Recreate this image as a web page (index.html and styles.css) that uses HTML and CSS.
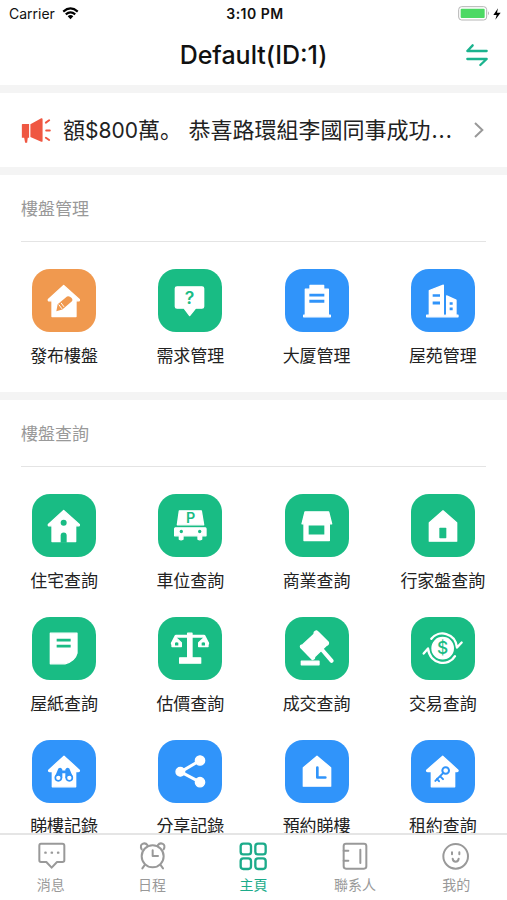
FILE: index.html
```
<!DOCTYPE html>
<html lang="zh-Hant">
<head>
    <meta charset="UTF-8">
    <meta name="viewport" content="width=device-width, initial-scale=1.0">
    <title>主頁</title>
    <link rel="stylesheet" href="styles.css">
</head>
<body>
    <div class="app">
        <div class="status-bar">
            <div class="carrier">
                <span class="carrier-name">Carrier</span>
                <svg class="wifi" viewBox="0 0 54 40">
                    <path d="M4 14Q27-6 50 14" fill="none" stroke="#000" stroke-width="7"/>
                    <path d="M12 23Q27 10 42 23" fill="none" stroke="#000" stroke-width="7"/>
                    <path d="M18 29Q27 21 36 29L27 38Z"/>
                </svg>
            </div>
            <span class="time">3:10 PM</span>
            <div class="power">
                <svg class="battery" viewBox="0 0 96 45">
                    <rect x="2" y="2" width="84" height="40" rx="9" fill="#fff" stroke="#b5b5b5" stroke-width="3"/>
                    <rect x="8" y="8" width="72" height="28" rx="3" fill="#4cd964"/>
                    <path d="M90 16q6 6 0 12z" fill="#b5b5b5"/>
                </svg>
                <svg class="bolt" viewBox="0 0 24 36"><path d="M15 1L1 21h10L7 35 23 14H12z"/></svg>
            </div>
        </div>

        <header class="navbar">
            <h1>Default(ID:1)</h1>
            <svg class="swap" viewBox="0 0 66 66"><path d="M62 21H4L20 4M4 45H62L43 63"/></svg>
        </header>

        <div class="notice">
            <svg class="horn" viewBox="0 0 88 76">
                <path d="M3 18H23V60H19L17 75H11L8 60H1V20Q1 18 3 18Z"/>
                <path d="M27 19L60 1Q64 0 64 4V69Q64 74 60 72L27 58Z"/>
                <path class="wave" d="M74 14L84 7M75 38H86M74 60L84 67"/>
            </svg>
            <p>額<span class="num">$800</span>萬<span class="stop" lang="zh-Hans">。</span> 恭喜路環組李國同事成功<span class="dots">...</span></p>
            <svg class="arrow" viewBox="0 0 30 48"><path d="M3 3L25 24 3 45"/></svg>
        </div>

        <main>
            <section>
                <h2>樓盤管理</h2>
                <div class="menu">
                    <div class="menu-item">
                        <svg class="tile orange" viewBox="0 0 192 188">
                            <path class="w" d="M95 49L142 91Q143 95 139 95H132V142H60V95H52Q48 95 49 91Z"/>
                            <path class="c" d="M73 126L77 105 105 82Q112 79 118 86T119 97L91 121Z"/>
                            <path class="hole" d="M80 106L90 119M87 101L96 113"/>
                        </svg>
                        <span>發布樓盤</span>
                    </div>
                    <div class="menu-item">
                        <svg class="tile green" viewBox="0 0 192 188">
                            <path class="w" d="M57 53H132Q137 53 137 58V112Q137 117 132 117H113L95 139 78 117H57Q52 117 52 112V58Q52 53 57 53Z"/>
                            <text class="c" x="95" y="104" font-size="53">?</text>
                        </svg>
                        <span>需求管理</span>
                    </div>
                    <div class="menu-item">
                        <svg class="tile blue" viewBox="0 0 192 188">
                            <path class="w" d="M75 49H116V60H130V138H136V143H56V138H61V60H75Z"/>
                            <path class="c" d="M73 74H118V82H73ZM73 92H118V101H73Z"/>
                        </svg>
                        <span>大厦管理</span>
                    </div>
                    <div class="menu-item">
                        <svg class="tile blue" viewBox="0 0 192 188">
                            <path class="w" d="M55 64L97 48V138H107V80L135 93V138H141V143H47V138H55Z"/>
                            <path class="c" d="M65 75H87V83H65ZM65 97H87V106H65ZM99 60H104V135H99ZM116 99H125V107H116ZM116 115H125V123H116Z"/>
                        </svg>
                        <span>屋苑管理</span>
                    </div>
                </div>
            </section>

            <section>
                <h2>樓盤查詢</h2>
                <div class="menu">
                    <div class="menu-item">
                        <svg class="tile green" viewBox="0 0 192 188">
                            <path class="w" d="M95 49L142 91Q143 95 139 95H131V142H60V95H52Q48 95 49 91Z"/>
                            <circle class="c" cx="95" cy="86" r="9"/>
                            <path class="c" d="M86 146V124Q86 115 95 115T104 124V146Z"/>
                        </svg>
                        <span>住宅查詢</span>
                    </div>
                    <div class="menu-item">
                        <svg class="tile green" viewBox="0 0 192 188">
                            <path class="w" d="M64 50H130L137 92H58ZM52 101H142Q144 101 144 104V125H131V135Q125 139 120 135V125H75V135Q69 139 64 135V125H50V104Q50 101 52 101Z"/>
                            <text class="c" x="98" y="88" font-size="43">P</text>
                            <circle class="c" cx="70" cy="112" r="5"/>
                            <circle class="c" cx="125" cy="112" r="5"/>
                        </svg>
                        <span>車位查詢</span>
                    </div>
                    <div class="menu-item">
                        <svg class="tile green" viewBox="0 0 192 188">
                            <path class="w" d="M60 53H131L140 89H133V139H57V89H51Z"/>
                            <rect class="c" x="71" y="94" width="47" height="27"/>
                        </svg>
                        <span>商業查詢</span>
                    </div>
                    <div class="menu-item">
                        <svg class="tile green" viewBox="0 0 192 188">
                            <path class="w" d="M96 50L137 86V141H55V86Z"/>
                            <rect class="c" x="85" y="101" width="21" height="31" rx="2"/>
                        </svg>
                        <span>行家盤查詢</span>
                    </div>
                    <div class="menu-item">
                        <svg class="tile green" viewBox="0 0 192 188">
                            <path class="w" d="M55 48H135V108Q129 132 99 140H55Z"/>
                            <path class="c" d="M74 65H116V73H74ZM74 83H116V91H74Z"/>
                        </svg>
                        <span>屋紙查詢</span>
                    </div>
                    <div class="menu-item">
                        <svg class="tile green" viewBox="0 0 192 188">
                            <path class="w" d="M89 48H102V122H128V138H65V122H89Z"/>
                            <path class="line" d="M43 79L54 57H138L149 79" stroke-width="9"/>
                            <path class="w" d="M42 77L54 62 70 77V88H42ZM122 77L138 62 150 77V88H122Z"/>
                            <path class="c" d="M51 85V77Q56 73 61 77V85ZM131 85V77Q136 73 141 77V85Z"/>
                        </svg>
                        <span>估價查詢</span>
                    </div>
                    <div class="menu-item">
                        <svg class="tile green" viewBox="0 0 192 188">
                            <path class="w" d="M88 45Q94 37 100 45L130 75Q132 82 124 85L89 119Q89 127 82 127L47 91Q44 84 53 83L87 51Z"/>
                            <path class="line" d="M108 94L140 131" stroke-width="12"/>
                            <rect class="w" x="49" y="132" width="53" height="11"/>
                        </svg>
                        <span>成交查詢</span>
                    </div>
                    <div class="menu-item">
                        <svg class="tile green" viewBox="0 0 192 188">
                            <circle class="w" cx="95" cy="93" r="32"/>
                            <path class="line" d="M61 65C83 37 133 46 138 91L152 76M38 109L51 94C57 143 113 150 132 117" stroke-width="7"/>
                            <text class="c dollar" x="95" y="111" font-size="52">$</text>
                        </svg>
                        <span>交易查詢</span>
                    </div>
                    <div class="menu-item">
                        <svg class="tile blue" viewBox="0 0 192 188">
                            <path class="w" d="M96 48L142 90Q143 94 139 94H131V140H61V94H53Q49 94 50 90Z"/>
                            <path class="c" d="M68 111L79 85Q87 80 91 88V114ZM100 114V88Q104 80 112 85L123 111ZM91 91H100V99H91Z"/>
                            <circle class="lens" cx="79" cy="113" r="9"/>
                            <circle class="lens" cx="112" cy="113" r="9"/>
                        </svg>
                        <span>睇樓記錄</span>
                    </div>
                    <div class="menu-item">
                        <svg class="tile blue" viewBox="0 0 192 188">
                            <path class="line" d="M126 61L68 95 126 126" stroke-width="9"/>
                            <circle class="w" cx="67" cy="95" r="13"/>
                            <circle class="w" cx="126" cy="61" r="14"/>
                            <circle class="w" cx="126" cy="126" r="14"/>
                        </svg>
                        <span>分享記錄</span>
                    </div>
                    <div class="menu-item">
                        <svg class="tile blue" viewBox="0 0 192 188">
                            <path class="w" d="M96 48L137 83V138H55V83Z"/>
                            <path class="hand" d="M97 82V112H121"/>
                        </svg>
                        <span>預約睇樓</span>
                    </div>
                    <div class="menu-item">
                        <svg class="tile blue" viewBox="0 0 192 188">
                            <path class="w" d="M95 48L141 90Q142 94 138 94H131V140H61V94H50Q46 94 47 90Z"/>
                            <circle class="key" cx="104" cy="91" r="10"/>
                            <path class="key" d="M97 98L73 122M87 108L96 117M78 116L84 123"/>
                        </svg>
                        <span>租約查詢</span>
                    </div>
                </div>
            </section>
        </main>

        <nav class="tabbar">
            <div class="tab">
                <svg viewBox="0 0 84 84">
                    <path d="M12 5H76Q82 5 82 11V55Q82 60 76 60H60L44 77 28 60H12Q7 60 7 55V11Q7 5 12 5Z"/>
                    <path class="dot" d="M25 32h1M44 32h1M63 32h1"/>
                </svg>
                <span>消息</span>
            </div>
            <div class="tab">
                <svg viewBox="0 0 84 84">
                    <circle cx="44" cy="43" r="33"/>
                    <path d="M44 25V42H60M21 68L13 79M67 68L75 79M11 22C2 5 21-1 29 10M77 22C86 5 67-1 59 10"/>
                </svg>
                <span>日程</span>
            </div>
            <div class="tab active">
                <svg viewBox="0 0 84 84">
                    <rect x="5" y="5" width="31" height="32" rx="8"/>
                    <rect x="49" y="5" width="31" height="32" rx="8"/>
                    <rect x="5" y="49" width="31" height="32" rx="8"/>
                    <rect x="49" y="49" width="31" height="32" rx="8"/>
                </svg>
                <span>主頁</span>
            </div>
            <div class="tab">
                <svg viewBox="0 0 84 84">
                    <rect x="8" y="5" width="68" height="75" rx="7"/>
                    <path d="M8 26H22M8 56H22M58 23V63"/>
                </svg>
                <span>聯系人</span>
            </div>
            <div class="tab">
                <svg viewBox="0 0 84 84">
                    <circle cx="41" cy="43" r="37"/>
                    <path d="M30 31V37M52 31V37M32 50Q33 59 41 59T50 50"/>
                </svg>
                <span>我的</span>
            </div>
        </nav>
    </div>
</body>
</html>
```
FILE: styles.css
```
* {
    box-sizing: border-box;
}

body {
    margin: 0;
    background-color: #fff;
    font-family: "Noto Sans CJK TC", sans-serif;
    color: #222;
}

svg {
    display: block;
    flex: none;
    overflow: visible;
}

h1, h2, p {
    margin: 0;
    font-weight: normal;
}

.app {
    display: flex;
    flex-direction: column;
    height: 900px;
    overflow: hidden;
}

.status-bar {
    display: grid;
    grid-template-columns: 1fr auto 1fr;
    align-items: center;
    height: 27px;
    padding: 0 6px 0 9px;
    font-family: Inter, sans-serif;
    font-size: 14px;
    color: #111;
}

.carrier {
    display: flex;
    align-items: center;
    gap: 7px;
}

.time {
    font-weight: 600;
    letter-spacing: 0.5px;
}

.wifi {
    width: 17px;
    height: 13px;
}

.power {
    display: flex;
    justify-content: flex-end;
    align-items: center;
    gap: 3px;
}

.battery {
    width: 32px;
    height: 15px;
}

.bolt {
    width: 8px;
    height: 12px;
}

.navbar {
    display: grid;
    grid-template-columns: 1fr auto 1fr;
    align-items: center;
    height: 58px;
    padding: 0 19px;
}

.navbar h1 {
    grid-column: 2;
    font-family: Inter, sans-serif;
    font-size: 25px;
    font-weight: 500;
    line-height: 30px;
    margin-bottom: 2px;
    color: #111;
}

.swap {
    justify-self: end;
    width: 22px;
    height: 22px;
    margin-bottom: 3px;
    fill: none;
    stroke: #1bb38e;
    stroke-width: 7;
    stroke-linecap: round;
    stroke-linejoin: round;
}

.notice {
    display: flex;
    align-items: center;
    height: 90px;
    padding: 0 23px 0 21px;
    border-top: 8px solid #f4f4f4;
    border-bottom: 8px solid #f4f4f4;
}

.horn {
    width: 30px;
    height: 25px;
    fill: #ef5742;
}

.horn .wave {
    stroke: #ef5742;
    stroke-width: 6;
    stroke-linecap: round;
}

.notice p {
    flex: 1;
    margin: 0 0 4px 12px;
    font-size: 22px;
    white-space: nowrap;
}

.notice .num {
    font-family: Inter, sans-serif;
    font-size: 21px;
}

.notice .stop {
    margin-right: 1.5px;
    font-family: "Noto Sans CJK SC", sans-serif;
}

.notice .dots {
    margin-left: 1px;
    letter-spacing: 1px;
}

.arrow {
    width: 10px;
    height: 16px;
    fill: none;
    stroke: #999;
    stroke-width: 6;
}

main {
    flex: 1;
    min-height: 0;
    overflow: hidden;
}

section {
    border-bottom: 8px solid #f4f4f4;
}

section h2 {
    height: 67px;
    margin: 0 21px;
    border-bottom: 1px solid #e4e4e4;
    font-size: 17px;
    line-height: 66px;
    color: #999;
}

.menu {
    display: grid;
    grid-template-columns: repeat(4, 1fr);
    row-gap: 23px;
    padding: 27px 1px 23px;
}

.menu-item {
    display: flex;
    flex-direction: column;
    align-items: center;
    height: 100px;
}

.menu-item span {
    margin-top: 11px;
    font-size: 17px;
    line-height: 24px;
}

.menu-item:nth-child(n+9) span {
    margin-top: 10px;
}

.tile {
    width: 64px;
    height: 63px;
    border-radius: 18px;
}

.orange {
    background-color: #f0994f;
    color: #f0994f;
}

.green {
    background-color: #19bc84;
    color: #19bc84;
}

.blue {
    background-color: #3094fa;
    color: #3094fa;
}

.tile .w {
    fill: #fff;
    stroke: #fff;
    stroke-width: 4;
    stroke-linejoin: round;
}

.tile .c {
    fill: currentColor;
}

.tile text {
    font-family: Inter, sans-serif;
    font-weight: 600;
    text-anchor: middle;
}

.tile .dollar {
    font-weight: 500;
}

.tile .line {
    fill: none;
    stroke: #fff;
    stroke-linecap: round;
    stroke-linejoin: round;
}

.tile .hole {
    fill: none;
    stroke: #fff;
    stroke-width: 3;
}

.tile .lens {
    fill: #fff;
    stroke: currentColor;
    stroke-width: 5;
}

.tile .hand,
.tile .key {
    fill: none;
    stroke: currentColor;
    stroke-width: 8;
    stroke-linecap: round;
    stroke-linejoin: round;
}

.tile .key {
    stroke-width: 6;
}

.tabbar {
    display: grid;
    grid-template-columns: repeat(5, 1fr);
    height: 67px;
    border-top: 2px solid #e5e5e5;
    background-color: #fff;
}

.tab {
    display: flex;
    flex-direction: column;
    align-items: center;
    padding-top: 7px;
    color: #999;
}

.tab svg {
    width: 28px;
    height: 28px;
    fill: none;
    stroke: currentColor;
    stroke-width: 6;
    stroke-linecap: round;
    stroke-linejoin: round;
}

.tab .dot {
    stroke-width: 7;
}

.tab span {
    margin-top: 4px;
    font-size: 14px;
    line-height: 20px;
}

.tab.active {
    color: #1cab8a;
}

.tab.active svg {
    stroke-width: 7;
}
```
